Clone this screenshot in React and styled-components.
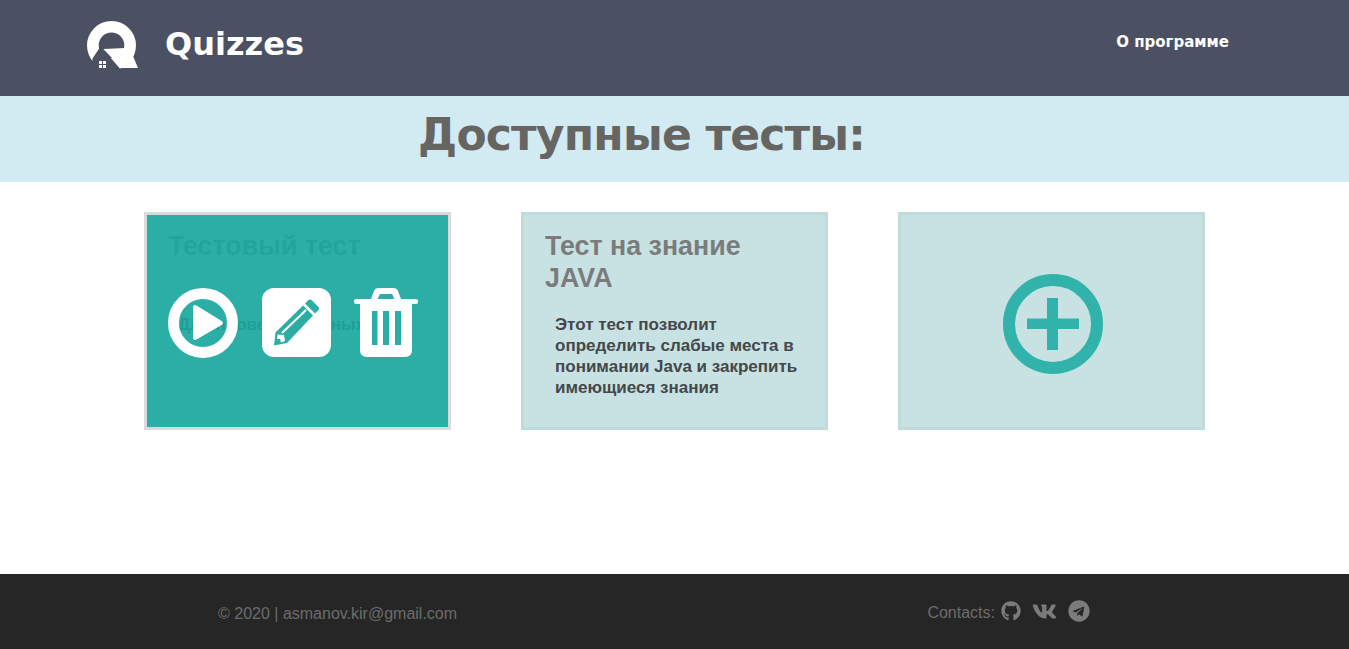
import React from "react";
import styled, { createGlobalStyle } from "styled-components";
import { FaGithub, FaVk, FaTelegram } from "react-icons/fa";

const Global = createGlobalStyle`
  html, body { margin: 0; padding: 0; background: #fff; }
  body { font-family: "Liberation Sans", Arial, sans-serif; }
`;

const Page = styled.div`
  width: 1349px;
  height: 649px;
  display: flex;
  flex-direction: column;
  overflow: hidden;
`;

const Header = styled.header`
  height: 96px;
  flex: none;
  background: #4b5063;
  display: flex;
  align-items: flex-start;
  padding: 21px 120px 0 87px;
  box-sizing: border-box;
`;

const Brand = styled.div`
  display: flex;
  align-items: flex-start;
  gap: 26px;
  flex: 1;
`;

const BrandName = styled.span`
  font-family: "DejaVu Sans", Verdana, sans-serif;
  font-weight: 700;
  font-size: 32px;
  line-height: 46px;
  color: #fff;
`;

const NavLink = styled.a`
  font-family: "DejaVu Sans", Verdana, sans-serif;
  font-weight: 700;
  font-size: 15px;
  line-height: 42px;
  color: #fff;
`;

const Band = styled.div`
  height: 86px;
  flex: none;
  background: #d2eaf1;
  display: flex;
  justify-content: center;
  padding-right: 66px;
`;

const Title = styled.h1`
  margin: 0;
  font-family: "DejaVu Sans", Verdana, sans-serif;
  font-weight: 700;
  font-size: 44px;
  letter-spacing: -0.8px;
  line-height: 78px;
  color: #666562;
`;

const Main = styled.main`
  flex: 1;
  display: flex;
  justify-content: center;
  align-items: flex-start;
  gap: 70px;
  padding-top: 30px;
`;

const Card = styled.article`
  position: relative;
  width: 307px;
  height: 218px;
  box-sizing: border-box;
  background: #c8e2e3;
  border: 3px solid ${(p) => (p.$active ? "#d9dcdc" : "#c0dbdb")};
  padding: 15px 20px 15px 21px;
  display: ${(p) => (p.$center ? "flex" : "block")};
  align-items: center;
  justify-content: center;
`;

const CardTitle = styled.h2`
  margin: 0;
  min-height: 64px;
  font-size: 26.8px;
  line-height: 32px;
  font-weight: 700;
  color: #7b7b7b;
`;

const CardText = styled.p`
  margin: 20px 0 0 10px;
  font-size: 17px;
  line-height: 21px;
  font-weight: 700;
  color: #45474a;
`;

const Overlay = styled.div`
  position: absolute;
  inset: 0;
  background: rgba(25, 168, 158, 0.9);
  display: flex;
  align-items: flex-start;
  gap: 23px;
  padding: 73px 0 0 21px;
`;

const PlusWrap = styled.div`
  display: flex;
  margin: 6px 0 0 2px;
`;

const Footer = styled.footer`
  height: 75px;
  flex: none;
  background: #262626;
  display: flex;
  justify-content: space-between;
  color: #6c6c6c;
  font-size: 16px;
  padding: 0 259px 0 218px;
`;

const Copy = styled.span`
  line-height: 79px;
`;

const Contacts = styled.div`
  display: flex;
  align-items: flex-start;
  gap: 10px;
  padding-top: 25px;
  line-height: 27px;
`;

const IconRow = styled.div`
  display: flex;
  align-items: center;
  gap: 11px;
  margin-left: -4px;
  height: 22px;
  margin-top: 1px;
  color: #7b7b7b;
  font-size: 22px;
  & > svg { display: block; }
`;

const Logo = () => (
  <svg width="52" height="48" viewBox="0 0 52 48" aria-hidden="true">
    <path fill="#fff" fillRule="evenodd" d="M24.500 0a24.500 24.500 0 1 1 0 49a24.500 24.500 0 1 1 0-49zM24.500 11.500a12.800 12.800 0 1 0 0 25.600a12.800 12.800 0 1 0 0-25.600z" />
    <path fill="#4b5063" d="M12.300 27.300L5.700 37.300L4 50H35L16.300 28.300z" />
    <path fill="#fff" d="M16.300 28L38 27L46 35L51 47H34.700z" />
    <path fill="#fff" d="M12 40h3v3h-3zM16 40h3v3h-3zM12 44h3v3h-3zM16 44h3v3h-3z" />
  </svg>
);

const PlayIcon = () => (
  <svg width="70" height="70" viewBox="0 0 70 70" aria-hidden="true">
    <circle cx="35" cy="35" r="29.500" fill="none" stroke="#fff" strokeWidth="11" />
    <path fill="#fff" stroke="#fff" strokeWidth="4" strokeLinejoin="round" d="M27 19L53 35L27 50z" />
  </svg>
);

const EditIcon = () => (
  <svg width="70" height="70" viewBox="-1 0 70 70" aria-hidden="true">
    <rect x="0" y="0" width="69" height="69" rx="12" fill="#fff" />
    <path fill="#2bada4" d="M46 12.500Q48 10.500 50 12.500L56 18.500Q58 20.500 56 22.500L53 25.500L43 15.500z" />
    <path fill="#2bada4" d="M41 17.500L51 27.500L25 55L12 57.500L13.500 44.500z" />
    <path fill="none" stroke="#fff" strokeWidth="2" d="M20 45L44 22" />
    <path fill="#fff" d="M15.500 46.500L22 47L23 53L19 54.500L18 51L15 51z" />
  </svg>
);

const TrashIcon = () => (
  <svg width="64" height="70" viewBox="0 0 64 70" aria-hidden="true">
    <path fill="#fff" fillRule="evenodd" d="M17 11L20 3Q21 0 25 0H39Q43 0 44 3L47 11H62Q64 11 64 13V14Q64 16 62 16H58V62Q58 69 51 69H13Q6 69 6 62V16H2Q0 16 0 14V13Q0 11 2 11zM23.500 11H40.500L38 6H26zM18 23V57H23.500V23zM29 23V57H35V23zM41 23V57H47V23z" />
  </svg>
);

const PlusIcon = () => (
  <svg width="100" height="100" viewBox="0 0 100 100" aria-hidden="true">
    <circle cx="50" cy="50" r="44" fill="none" stroke="#31b3ab" strokeWidth="12" />
    <path fill="#31b3ab" d="M44 24H55V44.500H76V55H55V76H44V55H24V44.500H44z" />
  </svg>
);

export default function App() {
  return (
    <Page>
      <Global />
      <Header>
        <Brand>
          <Logo />
          <BrandName>Quizzes</BrandName>
        </Brand>
        <NavLink>О программе</NavLink>
      </Header>
      <Band>
        <Title>Доступные тесты:</Title>
      </Band>
      <Main>
        <Card $active>
          <CardTitle>Тестовый тест</CardTitle>
          <CardText>Для проверки данных</CardText>
          <Overlay>
            <PlayIcon />
            <EditIcon />
            <TrashIcon />
          </Overlay>
        </Card>
        <Card>
          <CardTitle>Тест на знание JAVA</CardTitle>
          <CardText>Этот тест позволит определить слабые места в понимании Java и закрепить имеющиеся знания</CardText>
        </Card>
        <Card $center>
          <PlusWrap>
            <PlusIcon />
          </PlusWrap>
        </Card>
      </Main>
      <Footer>
        <Copy>© 2020 | asmanov.kir@gmail.com</Copy>
        <Contacts>
          <span>Contacts:</span>
          <IconRow>
            <FaGithub size={20} />
            <FaVk size={25} />
            <FaTelegram size={22} />
          </IconRow>
        </Contacts>
      </Footer>
    </Page>
  );
}
